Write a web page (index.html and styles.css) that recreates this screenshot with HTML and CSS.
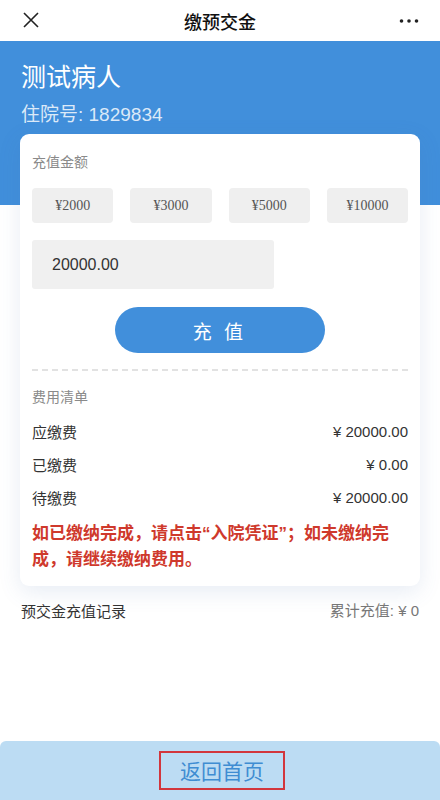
FILE: index.html
```html
<!DOCTYPE html>
<html lang="zh-CN">
<head>
<meta charset="utf-8">
<title>缴预交金</title>
<link rel="stylesheet" href="styles.css">
</head>
<body>
<div class="page">
  <header class="topbar">
    <svg class="close" width="16" height="16" viewBox="0 0 16 16"><path d="M1 1 L15 15 M15 1 L1 15" stroke="#222" stroke-width="1.6" fill="none"/></svg>
    <div class="title">缴预交金</div>
    <svg class="more" width="20" height="6" viewBox="0 0 20 6"><circle cx="2.5" cy="3" r="1.8" fill="#222"/><circle cx="10" cy="3" r="1.8" fill="#222"/><circle cx="17.5" cy="3" r="1.8" fill="#222"/></svg>
  </header>

  <main class="main">
    <div class="name">测试病人</div>
    <div class="inpatient">住院号: 1829834</div>

    <section class="card">
      <div class="label">充值金额</div>
      <div class="quick">
        <div class="qbtn">¥2000</div>
        <div class="qbtn">¥3000</div>
        <div class="qbtn">¥5000</div>
        <div class="qbtn">¥10000</div>
      </div>
      <div class="amount">20000.00</div>
      <div class="pay-wrap"><div class="pay">充 值</div></div>
      <div class="dash"></div>
      <div class="label label-fee">费用清单</div>
      <div class="rows">
        <div class="row"><span>应缴费</span><span class="num">¥ 20000.00</span></div>
        <div class="row"><span>已缴费</span><span class="num">¥ 0.00</span></div>
        <div class="row"><span>待缴费</span><span class="num">¥ 20000.00</span></div>
      </div>
      <p class="notice">如已缴纳完成，请点击“入院凭证”；如未缴纳完成，请继续缴纳费用。</p>
    </section>

    <div class="record">
      <span class="record-title">预交金充值记录</span>
      <span class="record-total">累计充值: ¥ 0</span>
    </div>
  </main>

  <footer class="footer">
    <div class="home">返回首页</div>
  </footer>
</div>
</body>
</html>
```

FILE: styles.css
```css
* { box-sizing: border-box; }
html, body { margin: 0; padding: 0; }
body {
  font-family: "Liberation Sans", "Noto Sans CJK SC", sans-serif;
  background: #fff;
  color: #333;
}
.page {
  min-height: 800px;
  display: flex;
  flex-direction: column;
}
.topbar {
  height: 41px;
  display: flex;
  align-items: center;
  justify-content: space-between;
  padding: 0 21px 0 23px;
  background: #fff;
}
.close { display: block; margin-top: -2px; }
.title {
  font-family: "Noto Sans CJK SC", sans-serif;
  font-size: 18px;
  font-weight: 500;
  color: #111;
  margin-left: 2px;
}
.more { display: block; }

.main {
  background: linear-gradient(#418fdb 0, #418fdb 164px, #fff 164px);
  padding: 18px 20px 0;
}
.name {
  font-family: "Noto Sans CJK SC", sans-serif;
  font-size: 25px;
  line-height: 32px;
  color: #fff;
  padding-left: 1px;
}
.inpatient {
  font-family: "Liberation Sans", "Noto Sans CJK SC", sans-serif;
  font-size: 19px;
  line-height: 24px;
  margin-top: 12px;
  color: rgba(255,255,255,0.82);
  padding-left: 1px;
}
.card {
  margin-top: 7px;
  background: #fff;
  border-radius: 9px;
  box-shadow: 0 6px 22px rgba(70, 110, 170, 0.13);
  padding: 17px 12px 13px;
}
.label {
  font-family: "Noto Sans CJK SC", sans-serif;
  font-size: 14px;
  line-height: 20px;
  color: #8a8a8a;
}
.quick {
  margin-top: 17px;
  display: grid;
  grid-template-columns: repeat(4, 1fr);
  gap: 17px;
}
.qbtn {
  height: 35px;
  background: #efefef;
  border-radius: 4px;
  display: flex;
  align-items: center;
  justify-content: center;
  font-family: "Liberation Serif", serif;
  font-size: 14px;
  color: #555;
}
.amount {
  margin-top: 17px;
  width: 242px;
  height: 49px;
  background: #f0f0f0;
  border-radius: 3px;
  display: flex;
  align-items: center;
  padding-left: 20px;
  font-size: 16px;
  color: #333;
}
.pay-wrap {
  margin-top: 18px;
  display: flex;
  justify-content: center;
}
.pay {
  width: 210px;
  height: 46px;
  border-radius: 23px;
  background: #418fdb;
  color: #fff;
  font-family: "Noto Sans CJK SC", sans-serif;
  font-size: 19px;
  letter-spacing: 4px;
  display: flex;
  align-items: center;
  justify-content: center;
}
.dash {
  margin-top: 16px;
  border-top: 2px dashed #e2e2e2;
  height: 0;
}
.label-fee { margin-top: 15px; }
.rows { margin-top: 9px; }
.row {
  height: 33px;
  display: flex;
  align-items: center;
  justify-content: space-between;
  font-size: 15px;
  color: #333;
}
.row span:first-child { font-family: "Noto Sans CJK SC", sans-serif; }
.num { font-family: "Liberation Sans", sans-serif; }
.notice {
  margin: 7px 0 0;
  padding-right: 12px;
  font-family: "Liberation Sans", "Noto Sans CJK SC", sans-serif;
  font-size: 17px;
  line-height: 26px;
  font-weight: 700;
  color: #cf392c;
}
.record {
  margin-top: 15px;
  display: flex;
  justify-content: space-between;
  align-items: center;
  padding: 0 1px;
  font-size: 15px;
  line-height: 20px;
}
.record-title { font-family: "Noto Sans CJK SC", sans-serif; color: #333; }
.record-total { color: #777; }

.footer {
  margin-top: auto;
  height: 59px;
  background: #bcdcf3;
  border-radius: 6px 6px 0 0;
  display: flex;
  align-items: center;
  justify-content: center;
}
.home {
  font-family: "Noto Sans CJK SC", sans-serif;
  font-size: 21px;
  line-height: 35px;
  color: #3f8dd2;
  border: 2px solid #d2363c;
  padding: 0 19px;
  margin-left: 4px;
}
```
